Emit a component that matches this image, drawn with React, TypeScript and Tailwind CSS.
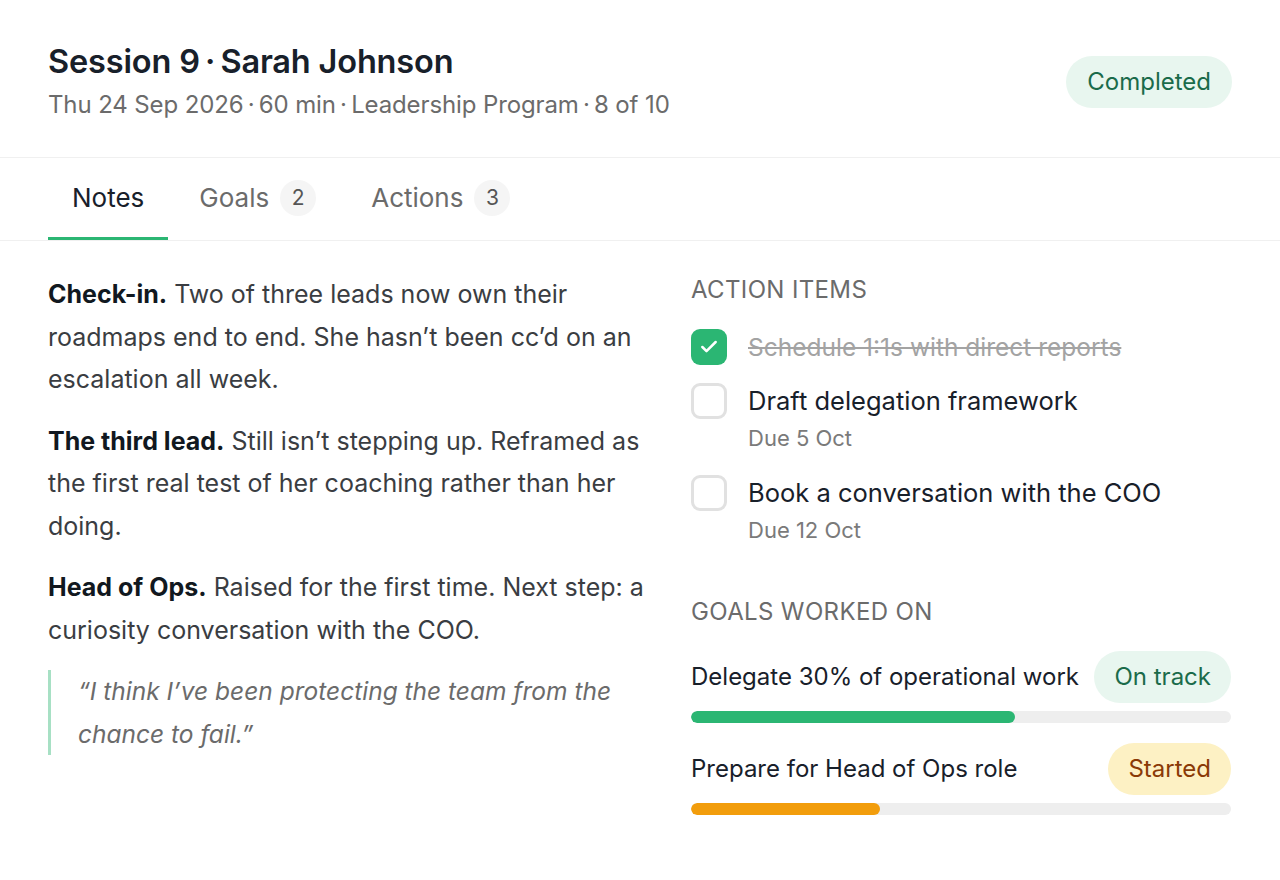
import { Check } from 'lucide-react';
import { clsx } from 'clsx';

const actions = [
  { title: 'Schedule 1:1s with direct reports', due: null, done: true },
  { title: 'Draft delegation framework', due: 'Due 5 Oct', done: false },
  { title: 'Book a conversation with the COO', due: 'Due 12 Oct', done: false },
];

const goals = [
  { title: 'Delegate 30% of operational work', status: 'On track', tone: 'green', progress: 60 },
  { title: 'Prepare for Head of Ops role', status: 'Started', tone: 'amber', progress: 35 },
];

const notes = [
  {
    label: 'Check-in.',
    text: 'Two of three leads now own their roadmaps end to end. She hasn\u2019t been cc\u2019d on an escalation all week.',
  },
  {
    label: 'The third lead.',
    text: 'Still isn\u2019t stepping up. Reframed as the first real test of her coaching rather than her doing.',
  },
  {
    label: 'Head of Ops.',
    text: 'Raised for the first time. Next step: a curiosity conversation with the COO.',
  },
];

// thin spaces around the separator dot
const sep = '\u2009·\u2009';

function Tab({ label, count, active }: { label: string; count?: number; active?: boolean }) {
  return (
    <button
      className={clsx(
        'flex items-center gap-[11px] h-full border-b-[3px] px-6',
        active ? 'border-[#2bb673] text-[#18202a]' : 'border-transparent text-[#6b6b6b]',
      )}
    >
      <span className="text-[26px]">{label}</span>
      {count !== undefined && (
        <span className="flex items-center justify-center w-[36px] h-[36px] rounded-full bg-[#f5f5f5] text-[21px] text-[#555]">
          {count}
        </span>
      )}
    </button>
  );
}

export default function App() {
  return (
    <div className="min-h-[880px] bg-white text-[#18202a]" style={{ fontFamily: 'Inter, "Noto Sans", sans-serif' }}>
      {/* Header */}
      <header className="flex items-start justify-between px-12 pt-[40px] pb-[34px] border-b border-[#f0f0f0]">
        <div>
          <h1 className="text-[32.5px] font-semibold tracking-[-0.005em] leading-[44px]">
            Session 9{sep}Sarah Johnson
          </h1>
          <p className="mt-[3px] text-[24px] leading-[36px] text-[#6b6b6b] tracking-[-0.005em]">
            Thu 24 Sep 2026{sep}60 min{sep}Leadership Program{sep}8 of 10
          </p>
        </div>
        <span className="mt-4 flex items-center h-[52px] px-[21px] rounded-full bg-[#e8f6ef] text-[#1a6b4a] text-[24px]">
          Completed
        </span>
      </header>

      {/* Tabs */}
      <nav className="flex h-[83px] px-12 gap-[7px] border-b border-[#f0f0f0]">
        <Tab label="Notes" active />
        <Tab label="Goals" count={2} />
        <Tab label="Actions" count={3} />
      </nav>

      <main className="grid grid-cols-[600px_540px] gap-[43px] px-12 pt-[32px]">
        {/* Notes */}
        <section className="text-[25px] leading-[42.5px] text-[#3a3d42]">
          {notes.map((n) => (
            <p key={n.label} className="mb-[19px]">
              <strong className="font-bold text-[#111820]">{n.label}</strong> {n.text}
            </p>
          ))}
          <blockquote className="border-l-[3px] border-[#a7e0c4] pl-[27px] italic text-[#6b6b6b] text-[24.5px]">
            “I think I’ve been protecting the team from the chance to fail.”
          </blockquote>
        </section>

        {/* Side panel */}
        <aside>
          <h2 className="mt-[3px] text-[24px] uppercase text-[#6b6b6b] tracking-[0.015em] leading-[28px]">
            Action items
          </h2>
          <ul className="mt-[25px] flex flex-col gap-[18px]">
            {actions.map((a) => (
              <li key={a.title} className="flex gap-[21px]">
                <span
                  className={clsx(
                    'flex items-center justify-center w-[36px] h-[36px] rounded-[9px] shrink-0',
                    a.done ? 'bg-[#2bb673]' : 'border-[3px] border-[#e1e1e1]',
                  )}
                >
                  {a.done && <Check className="w-5 h-5 text-white" strokeWidth={3} />}
                </span>
                <div>
                  <p
                    className={clsx(
                      'leading-[36px]',
                      a.done ? 'text-[24.5px] line-through text-[#a3a3a3]' : 'text-[25.5px] text-[#18202a]',
                    )}
                  >
                    {a.title}
                  </p>
                  {a.due && <p className="text-[22px] leading-[38px] text-[#7a7a7a]">{a.due}</p>}
                </div>
              </li>
            ))}
          </ul>

          <h2 className="mt-[49px] text-[24px] uppercase text-[#6b6b6b] tracking-[0.015em] leading-[28px]">
            Goals worked on
          </h2>
          <ul className="mt-[25px] flex flex-col gap-[20px]">
            {goals.map((g) => (
              <li key={g.title}>
                <div className="flex items-center justify-between">
                  <span className="text-[24px] text-[#18202a]">{g.title}</span>
                  <span
                    className={clsx(
                      'flex items-center h-[52px] px-[20px] rounded-full text-[24px]',
                      g.tone === 'green' ? 'bg-[#e8f6ef] text-[#1a6b4a]' : 'bg-[#fdf1c4] text-[#8a3a06]',
                    )}
                  >
                    {g.status}
                  </span>
                </div>
                <div className="mt-[8px] h-[12px] rounded-full bg-[#eeeeee] overflow-hidden">
                  <div
                    className={clsx('h-full rounded-full', g.tone === 'green' ? 'bg-[#2bb673]' : 'bg-[#f29d0c]')}
                    style={{ width: `${g.progress}%` }}
                  />
                </div>
              </li>
            ))}
          </ul>
        </aside>
      </main>
    </div>
  );
}
